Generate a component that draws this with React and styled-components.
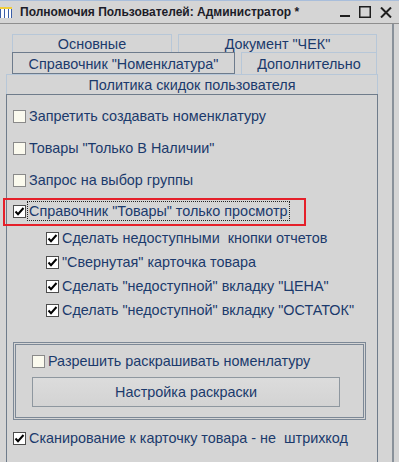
import React from "react";
import styled, { createGlobalStyle } from "styled-components";

const GlobalStyle = createGlobalStyle`
  html, body {
    margin: 0;
    padding: 0;
    background: #d5d5d5;
  }
  body {
    font-family: "Liberation Sans", Arial, sans-serif;
  }
`;

const TEXT = "#1b3a6c";

const Window = styled.div`
  width: 399px;
  height: 462px;
  overflow: hidden;
  background: #d5d5d5;
  display: flex;
  flex-direction: column;
`;

const TitleBar = styled.div`
  height: 22px;
  flex: none;
  display: flex;
  align-items: center;
  border-top: 1px solid #a9bedb;
  border-bottom: 1px solid #8e8e8e;
`;

const AppIcon = styled.svg`
  width: 12px;
  height: 11px;
  margin-top: 1px;
`;

const Title = styled.span`
  margin-left: 8px;
  font-size: 12px;
  font-weight: bold;
  color: #1c1c28;
  flex: 1;
  white-space: nowrap;
`;

const Controls = styled.div`
  display: flex;
  align-items: center;
  gap: 9px;
  margin-right: 7px;
`;

const Body = styled.div`
  flex: 1;
  display: flex;
`;

const Frame = styled.div`
  width: 394px;
  border-right: 2px solid #89919a;
  padding: 10px 0 0 6px;
  box-sizing: border-box;
  display: flex;
  flex-direction: column;
`;

const TabRow = styled.div`
  display: flex;
  gap: 6px;
  margin-left: ${(p) => p.$indent || 0}px;
  width: ${(p) => p.$width}px;
  height: ${(p) => p.$height}px;
`;

const Tab = styled.div`
  box-sizing: border-box;
  height: 100%;
  width: ${(p) => (p.$width ? `${p.$width}px` : "auto")};
  flex: ${(p) => (p.$width ? "none" : 1)};
  border: 1px solid ${(p) => (p.$dark ? "#6d7b8c" : "#b7c7d8")};
  border-bottom: ${(p) => (p.$dark ? "1px solid #6d7b8c" : "none")};
  display: flex;
  align-items: center;
  justify-content: center;
  font-size: 14.4px;
  color: ${TEXT};
  white-space: nowrap;
  padding-top: 1px;
`;

const Panel = styled.div`
  width: 372px;
  flex: 1;
  box-sizing: border-box;
  border: 1px solid #6f7c8b;
  border-bottom: none;
  padding-top: 5px;
  display: flex;
  flex-direction: column;
`;

const Row = styled.div`
  position: relative;
  display: flex;
  align-items: center;
  height: ${(p) => p.$height}px;
  padding-left: ${(p) => p.$indent}px;
  flex: none;
`;

const Box = styled.span`
  width: 13px;
  height: 13px;
  box-sizing: border-box;
  flex: none;
  border: 1px solid ${(p) => (p.$checked ? "#4c4c4c" : "#8a8a8a")};
  background: ${(p) => (p.$checked ? "#ffffff" : "#fbfaee")};
  display: flex;
  align-items: center;
  justify-content: center;
`;

const Label = styled.span`
  margin-left: 1px;
  font-size: 14.4px;
  color: ${TEXT};
  white-space: pre;
  padding: 1px 1px;
  border: 1px ${(p) => (p.$focused ? "dotted #222" : "solid transparent")};
`;

const Highlight = styled.span`
  position: absolute;
  left: -4px;
  top: 2px;
  width: 303px;
  height: 28px;
  box-sizing: border-box;
  border: 2px solid #e5202a;
  pointer-events: none;
`;

const Group = styled.div`
  margin: 20px 0 0 6px;
  width: 353px;
  box-sizing: border-box;
  border: 3px double #7c8896;
  padding: 6px 0 10px 16px;
  display: flex;
  flex-direction: column;
`;

const Button = styled.button`
  margin-top: 6px;
  width: 308px;
  height: 30px;
  border: 1px solid #8e979f;
  background: linear-gradient(#dcdcdc, #d3d3d3);
  font-family: inherit;
  font-size: 14.4px;
  color: ${TEXT};
  padding: 0;
`;

const Check = () => (
  <svg width="11" height="11" viewBox="0 0 11 11">
    <path d="M1.5 5.5 L4 8.2 L9.5 2" fill="none" stroke="#000" strokeWidth="2" />
  </svg>
);

const CheckRow = ({ checked, label, indent = 6, height = 32, focused, children }) => (
  <Row $indent={indent} $height={height}>
    <Box $checked={checked}>{checked && <Check />}</Box>
    <Label $focused={focused}>{label}</Label>
    {children}
  </Row>
);

export default function App() {
  return (
    <Window>
      <GlobalStyle />
      <TitleBar>
        <AppIcon viewBox="0 0 12 11">
          <rect x="0" y="0" width="12" height="11" fill="#ffffff" />
          <rect x="0" y="0" width="12" height="2" fill="#f2cf3a" />
          <rect x="0" y="2" width="1" height="9" fill="#3a5ea8" />
          <rect x="4" y="2" width="1" height="9" fill="#3a5ea8" />
          <rect x="8" y="2" width="1" height="9" fill="#3a5ea8" />
          <rect x="11" y="2" width="1" height="9" fill="#3a5ea8" />
        </AppIcon>
        <Title>Полномочия Пользователей: Администратор *</Title>
        <Controls>
          <svg width="10" height="12" viewBox="0 0 10 12">
            <rect x="0" y="9" width="10" height="2" fill="#1e1e1e" />
          </svg>
          <svg width="12" height="12" viewBox="0 0 12 12">
            <rect x="0.75" y="0.75" width="10.5" height="10.5" fill="none" stroke="#1e1e1e" strokeWidth="1.5" />
          </svg>
          <svg width="12" height="11" viewBox="0 0 12 11">
            <path d="M1 0.5 L11 10.5 M11 0.5 L1 10.5" stroke="#1e1e1e" strokeWidth="2" />
          </svg>
        </Controls>
      </TitleBar>
      <Body>
        <Frame>
          <TabRow $indent={6} $width={365} $height={18}>
            <Tab $width={160}>Основные</Tab>
            <Tab>Документ "ЧЕК"</Tab>
          </TabRow>
          <TabRow $indent={6} $width={365} $height={22}>
            <Tab $width={223} $dark>
              Справочник "Номенклатура"
            </Tab>
            <Tab>Дополнительно</Tab>
          </TabRow>
          <TabRow $width={372} $height={20}>
            <Tab>Политика скидок пользователя</Tab>
          </TabRow>
          <Panel>
            <CheckRow label="Запретить создавать номенклатуру" />
            <CheckRow label={'Товары "Только В Наличии"'} />
            <CheckRow label="Запрос на выбор группы" />
            <CheckRow checked focused height={30} label={'Справочник "Товары" только просмотр'}>
              <Highlight />
            </CheckRow>
            <CheckRow checked indent={39} height={24} label="Сделать недоступными  кнопки отчетов" />
            <CheckRow checked indent={39} height={24} label={'"Свернутая" карточка товара'} />
            <CheckRow checked indent={39} height={24} label={'Сделать "недоступной" вкладку "ЦЕНА"'} />
            <CheckRow checked indent={39} height={24} label={'Сделать "недоступной" вкладку "ОСТАТОК"'} />
            <Group>
              <CheckRow indent={0} height={20} label="Разрешить раскрашивать номенлатуру" />
              <Button>Настройка раскраски</Button>
            </Group>
            <Row $indent={0} $height={6} />
            <CheckRow checked height={24} label="Сканирование к карточку товара - не  штрихкод" />
          </Panel>
        </Frame>
      </Body>
    </Window>
  );
}
